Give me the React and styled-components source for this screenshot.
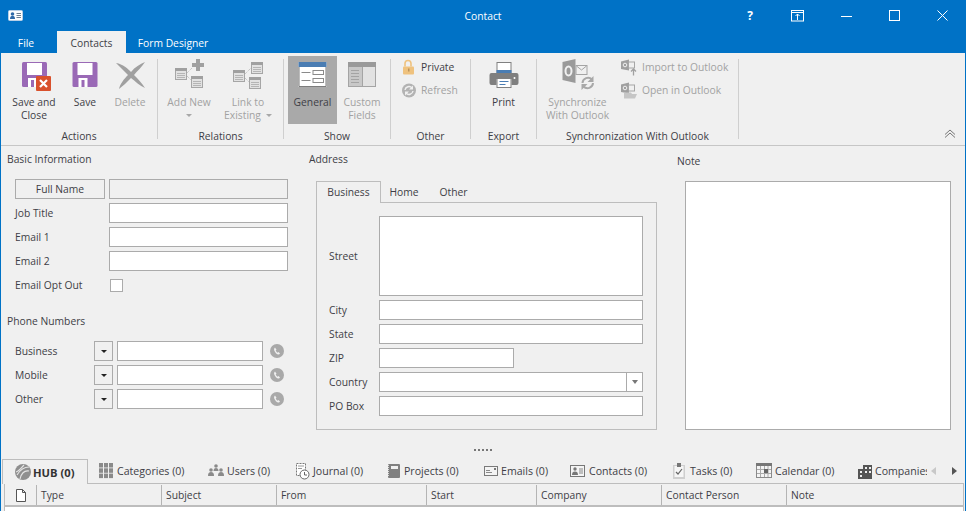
import React from 'react';
import styled, { createGlobalStyle } from 'styled-components';

const BLUE = '#0072c6';
const TEXT = '#3e3e46';
const MUTED = '#a2a2a2';
const FIELD = '#ababab';

const Global = createGlobalStyle`
  html, body { margin: 0; padding: 0; background: #f0f0f0; }
  * { box-sizing: border-box; }
`;

const Window = styled.div`
  width: 966px; height: 511px; overflow: hidden; background: ${BLUE};
  font-family: "Open Sans", "Liberation Sans", sans-serif; font-size: 10.3px; color: ${TEXT};
  display: flex; flex-direction: column;
`;
const TitleBar = styled.div`height: 31px; display: flex; align-items: center; padding-left: 8px; position: relative;`;
const Title = styled.div`
  position: absolute; left: 0; right: 0; top: 0; height: 31px; line-height: 32px; text-align: center; color: #fff;
  pointer-events: none;
`;
const WindowButtons = styled.div`display: flex; margin-left: auto;`;
const WindowButton = styled.div`width: 48px; height: 31px; display: flex; align-items: center; justify-content: center; color: #fff; font-weight: 700; font-size: 12px;`;

const MenuTabs = styled.div`height: 22px; display: flex; align-items: stretch;`;
const MenuTab = styled.div`
  width: ${p => p.$w}px; margin-left: ${p => p.$ml || 0}px; text-align: center; line-height: 24px;
  color: ${p => (p.$active ? TEXT : '#fff')}; background: ${p => (p.$active ? '#f0f0f0' : 'transparent')};
`;

const Body = styled.div`
  flex: 1; min-height: 0; margin: 0 1px; background: #f0f0f0; display: flex; flex-direction: column;
`;
const Ribbon = styled.div`
  height: 93px; flex: none; border-bottom: 1px solid #c6c6c6; display: flex; padding-top: 3px; color: ${TEXT};
`;
const Group = styled.div`width: ${p => p.$w}px; display: flex; flex-direction: column; flex: none;`;
const GroupItems = styled.div`height: 68px; display: flex; padding-left: ${p => p.$pl || 0}px;`;
const GroupLabel = styled.div`height: 16px; margin-top: 4px; line-height: 16px; text-align: center;`;
const Sep = styled.div`width: 1px; flex: none; height: 80px; margin-top: 3px; background: #cfcfcf;`;
const BigButton = styled.div`
  width: ${p => p.$w}px; flex: none; display: flex; flex-direction: column; align-items: center; padding-top: 2px;
  background: ${p => (p.$on ? '#a9a9a9' : 'transparent')}; color: ${p => (p.$off ? MUTED : TEXT)};
  margin-left: ${p => p.$ml || 0}px; text-align: center; line-height: 13px;
`;
const BigIcon = styled.svg`width: 44px; height: 37px; margin-bottom: 1px; flex: none; overflow: visible;`;
const Caret = styled.span`display: block; width: 0; height: 0; margin: 5px auto 0; border: 3px solid transparent; border-top: 3px solid #a8a8a8; border-bottom: 0;`;
const InlineCaret = styled(Caret)`display: inline-block; margin: 0 0 2px 5px;`;
const SmallCol = styled.div`display: flex; flex-direction: column; margin-left: ${p => p.$ml || 0}px;`;
const SmallRow = styled.div`height: 21px; margin-bottom: 2px; display: flex; align-items: center; color: ${p => (p.$off ? MUTED : TEXT)};`;
const SmallIcon = styled.svg`width: ${p => p.$w}px; height: 18px; flex: none; margin-right: ${p => p.$mr}px; overflow: visible;`;
const Collapse = styled.svg`margin: auto 9px 6px auto; width: 12px; height: 10px; flex: none;`;

const FormArea = styled.div`height: 294px; flex: none; display: flex;`;
const Col = styled.div`width: ${p => p.$w}px; flex: none; padding: ${p => p.$pt}px 0 0 ${p => p.$pl}px;`;
const SectionTitle = styled.div`height: 14px; line-height: 14px;`;
const PhoneTitle = styled(SectionTitle)`margin-top: 19px;`;
const Rows = styled.div`margin: ${p => p.$mt}px 0 0 ${p => p.$ml}px; display: flex; flex-direction: column; gap: 4px;`;
const Row = styled.div`display: flex; align-items: center; height: ${p => p.$h || 20}px;`;
const RowLabel = styled.div`width: ${p => p.$w}px; flex: none;`;
const Input = styled.div`
  width: ${p => p.$w}px; height: ${p => p.$h || 20}px; flex: none; background: ${p => (p.$ro ? '#f0f0f0' : '#fff')};
  border: 1px solid ${FIELD};
`;
const NameButton = styled.div`width: 90px; height: 20px; margin-right: 4px; flex: none; border: 1px solid ${FIELD}; text-align: center; line-height: 18px;`;
const Check = styled.div`width: 13px; height: 13px; background: #fff; border: 1px solid ${FIELD}; margin-left: 1px;`;
const DropButton = styled.div`
  width: 19px; height: 20px; flex: none; border: 1px solid ${FIELD}; margin-right: 4px; display: flex; align-items: center; justify-content: center;
  &::after { content: ''; border: 3px solid transparent; border-top: 3px solid #222; border-bottom: 0; }
`;
const PhoneIcon = styled.svg`width: 14px; height: 14px; margin-left: 7px; flex: none;`;

const AddressTabs = styled.div`display: flex; margin: 15px 0 0 7px; height: 22px; position: relative; z-index: 1;`;
const AddressTab = styled.div`
  width: ${p => p.$w}px; height: 22px; text-align: center; line-height: 23px;
  ${p => p.$active && `border: 1px solid #bdbdbd; border-bottom: 0; background: #f0f0f0; line-height: 21px;`}
`;
const AddressPanel = styled.div`
  width: 341px; height: 228px; margin: -1px 0 0 7px; border: 1px solid #bdbdbd; padding: 13px 0 0 12px;
  display: flex; flex-direction: column; gap: 4px;
`;
const ComboInput = styled(Input)`
  display: flex; justify-content: flex-end;
`;
const ComboButton = styled.div`
  width: 16px; border-left: 1px solid ${FIELD}; display: flex; align-items: center; justify-content: center;
  &::after { content: ''; border: 3.5px solid transparent; border-top: 4px solid #777; border-bottom: 0; }
`;
const NoteBox = styled.div`width: 266px; height: 249px; margin: 13px 0 0 8px; background: #fff; border: 1px solid ${FIELD};`;

const Splitter = styled.div`height: 19px; flex: none; display: flex; justify-content: center; gap: 2px; padding-top: 9px;`;
const Dot = styled.span`width: 2px; height: 2px; background: #777;`;

const BottomTabs = styled.div`height: 24px; flex: none; display: flex; padding-left: 1px; position: relative; font-size: 10.6px;`;
const BottomTab = styled.div`
  width: ${p => p.$w}px; height: 24px; flex: none; display: flex; align-items: center; padding-left: ${p => p.$pl ?? 11}px; overflow: hidden; white-space: nowrap;
  ${p => p.$active && `border: 1px solid #bdbdbd; border-bottom: 0; background: #f0f0f0; font-weight: 700; font-size: 11.2px; position: relative; z-index: 1; height: 25px; color: #333;`}
`;
const TabIcon = styled.svg`width: ${p => p.$w}px; height: 18px; flex: none; margin-right: ${p => p.$mr ?? 4}px; overflow: visible;`;
const Scroller = styled.div`display: flex; gap: 16px; align-items: center; margin-left: 4px;`;
const Arrow = styled.span`width: 0; height: 0; border: 4px solid transparent; border-right: 0; border-left: 5px solid ${p => (p.$on ? '#555' : '#c8c8c8')}; transform: scaleX(${p => (p.$flip ? -1 : 1)});`;
const GridPanel = styled.div`flex: 1; margin: 0 1px 0 3px; border: 1px solid #bdbdbd; border-bottom: 0; background: #fff; display: flex; flex-direction: column;`;
const GridHeader = styled.div`height: 23px; flex: none; background: #f0f0f0; display: flex; border-bottom: 2px solid #bdbdbd; padding-top: 1px;`;
const GridCell = styled.div`
  width: ${p => p.$w}px; flex: ${p => (p.$grow ? 1 : 'none')}; padding-left: 4px; display: flex; align-items: center; height: 20px;
  ${p => !p.$last && 'border-right: 1px solid #b4b4b4;'}
`;
const DocCell = styled(GridCell)`padding-left: 11px;`;

const Floppy = ({ x, y }) => (
  <g transform={`translate(${x} ${y})`}>
    <rect width="25" height="25" rx="1.5" fill="#9a69b6" />
    <rect x="5" y="1" width="15" height="12" fill="#fff" />
    <rect x="6" y="16" width="9" height="9" fill="#fff" />
    <rect x="9" y="18" width="3" height="7" fill="#9a69b6" />
  </g>
);
const Doc = ({ x, y }) => (
  <g transform={`translate(${x} ${y})`}>
    <rect x=".5" y=".5" width="11" height="11" fill="#e2e2e2" stroke="#a6a6a6" />
    <rect width="12" height="3" fill="#a0a0a0" />
    <path d="M2 5.5h8M2 7.5h8M2 9.5h8" stroke="#b5b5b5" />
  </g>
);
const view = (cx, y = 58) => `${cx - 22} ${y} 44 37`;

const WIDTHS = [32, 125, 115, 150, 110, 125, 125];
const GRID = ['Type', 'Subject', 'From', 'Start', 'Company', 'Contact Person'];

export default function App() {
  return (
    <Window>
      <Global />
      <TitleBar>
        <svg width="15" height="11" viewBox="0 0 15 11">
          <rect x=".5" y=".5" width="14" height="10" rx="1" fill="#fff" stroke="#b8cfe6" />
          <circle cx="4.5" cy="4" r="1.8" fill="#2f6aa8" />
          <path d="M2 9c0-2.500 1-3 2.500-3S7 6.500 7 9z" fill="#2f6aa8" />
          <path d="M8.500 3.500h4.500M8.500 5.500h4.500M8.500 7.500h4.500" stroke="#6f7f90" />
        </svg>
        <Title>Contact</Title>
        <WindowButtons>
          <WindowButton>?</WindowButton>
          <WindowButton>
            <svg width="14" height="12" viewBox="0 0 14 12" fill="none" stroke="#fff">
              <rect x=".5" y=".5" width="12" height="10.500" />
              <path d="M0 2.500h13M6.500 10V4M4.500 6l2-2 2 2" />
            </svg>
          </WindowButton>
          <WindowButton>
            <svg width="11" height="11" viewBox="0 0 11 11" stroke="#fff"><path d="M0 6.500h11" /></svg>
          </WindowButton>
          <WindowButton>
            <svg width="11" height="11" viewBox="0 0 11 11" fill="none" stroke="#fff"><rect x=".5" y=".5" width="10" height="10" /></svg>
          </WindowButton>
          <WindowButton>
            <svg width="11" height="11" viewBox="0 0 11 11" stroke="#fff"><path d="M.5.500l10 10M10.500.500l-10 10" /></svg>
          </WindowButton>
        </WindowButtons>
      </TitleBar>
      <MenuTabs>
        <MenuTab $w={52}>File</MenuTab>
        <MenuTab $w={69} $ml={5} $active>Contacts</MenuTab>
        <MenuTab $w={94}>Form Designer</MenuTab>
      </MenuTabs>
      <Body>
        <Ribbon>
          <Group $w={156}>
            <GroupItems $pl={5}>
              <BigButton $w={56}>
                <BigIcon viewBox={view(33)}>
                  <Floppy x={21} y={62} />
                  <rect x="35" y="76" width="15" height="15" rx="1" fill="#d9512c" />
                  <path d="M39 80l7 7M46 80l-7 7" stroke="#fff" strokeWidth="2.200" />
                </BigIcon>
                Save and Close
              </BigButton>
              <BigButton $w={46}>
                <BigIcon viewBox={view(85.5)}><Floppy x={73} y={62} /></BigIcon>
                Save
              </BigButton>
              <BigButton $w={44} $off>
                <BigIcon viewBox={view(131)}>
                  <path d="M117 63C124 64 129 69 132 72C136 67 141 64 146 62C143 67 138 71 135 75C139 79 143 83 146 88C141 86 136 81 132 78C128 82 124 86 120 89C121 84 125 79 129 75C125 71 121 67 117 63z" fill="#a0a0a0" />
                </BigIcon>
                Delete
              </BigButton>
            </GroupItems>
            <GroupLabel>Actions</GroupLabel>
          </Group>
          <Sep />
          <Group $w={125}>
            <GroupItems $pl={5}>
              <BigButton $w={52} $off>
                <BigIcon viewBox={view(189)}>
                  <path d="M187 73l5-5M187 76l4 4" stroke="#b5b5b5" strokeDasharray="1 1" fill="none" />
                  <Doc x={175} y={68} /><Doc x={191} y={76} />
                  <path d="M196 59h4v4h4v4h-4v4h-4v-4h-4v-4h4z" fill="#a0a0a0" />
                </BigIcon>
                Add New
                <Caret />
              </BigButton>
              <BigButton $w={56} $ml={5} $off>
                <BigIcon viewBox={view(248)}>
                  <path d="M245 74l6-6M245 78l4 4" stroke="#b5b5b5" strokeDasharray="1 1" fill="none" />
                  <Doc x={233} y={70} /><Doc x={251} y={62} /><Doc x={249} y={77} />
                </BigIcon>
                <span>Link to<br />Existing<InlineCaret /></span>
              </BigButton>
            </GroupItems>
            <GroupLabel>Relations</GroupLabel>
          </Group>
          <Sep />
          <Group $w={106}>
            <GroupItems $pl={4}>
              <BigButton $w={49} $on>
                <BigIcon viewBox={view(312.5)}>
                  <rect x="298" y="62" width="28" height="25" fill="#fff" />
                  <path d="M298.500 67v19.500h27V67" fill="none" stroke="#7d7d7d" />
                  <rect x="298" y="62" width="28" height="5" fill="#4a7db3" />
                  <path d="M301 72.500h9M301 80.500h9" stroke="#8a8a8a" />
                  <rect x="312.500" y="70.500" width="10.500" height="4" fill="#fff" stroke="#8a8a8a" />
                  <rect x="312.500" y="78.500" width="10.500" height="4" fill="#fff" stroke="#8a8a8a" />
                </BigIcon>
                General
              </BigButton>
              <BigButton $w={48} $ml={1} $off>
                <BigIcon viewBox={view(362)}>
                  <rect x="348.500" y="62.500" width="27" height="24" fill="#e2e2e2" stroke="#a4a4a4" />
                  <rect x="349" y="67" width="13" height="19" fill="#c8c8c8" />
                  <rect x="348" y="62" width="28" height="5" fill="#9a9a9a" />
                  <path d="M362.500 67v19M351 70.500h8M351 73.500h8M351 76.500h8M351 79.500h8M351 82.500h8" stroke="#a4a4a4" />
                </BigIcon>
                <span>Custom<br />Fields</span>
              </BigButton>
            </GroupItems>
            <GroupLabel>Show</GroupLabel>
          </Group>
          <Sep />
          <Group $w={79}>
            <GroupItems $pl={11}>
              <SmallCol>
                <SmallRow>
                  <SmallIcon $w={15} $mr={4} viewBox="402 57.5 15 18">
                    <path d="M405 66v-3a3 3 0 0 1 6 0v3" fill="none" stroke="#efc27e" strokeWidth="1.600" />
                    <rect x="403" y="66" width="11" height="8" rx="1" fill="#efc27e" />
                    <rect x="408" y="68" width="1.500" height="3" fill="#b9935c" />
                  </SmallIcon>
                  Private
                </SmallRow>
                <SmallRow $off>
                  <SmallIcon $w={15} $mr={4} viewBox="402 80.5 15 18">
                    <circle cx="409" cy="90" r="7" fill="#b3b3b3" />
                    <path d="M405 89.500a4 4 0 0 1 7-2M413 90.500a4 4 0 0 1-7 2" fill="none" stroke="#f0f0f0" strokeWidth="1.400" />
                    <path d="M413 85v4h-4zM405 95v-4h4z" fill="#f0f0f0" />
                  </SmallIcon>
                  Refresh
                </SmallRow>
              </SmallCol>
            </GroupItems>
            <GroupLabel>Other</GroupLabel>
          </Group>
          <Sep />
          <Group $w={65}>
            <GroupItems>
              <BigButton $w={65}>
                <BigIcon viewBox={view(503.5)}>
                  <rect x="496.500" y="62.500" width="14" height="11" fill="#fff" stroke="#808080" />
                  <rect x="496" y="70" width="15" height="3" fill="#4a7db3" />
                  <path d="M491 73h25a2 2 0 0 1 2 2v8a2 2 0 0 1-2 2h-5v-6h-15v6h-5a2 2 0 0 1-2-2v-8a2 2 0 0 1 2-2z" fill="#7f7f7f" />
                  <circle cx="514" cy="78" r="1" fill="#fff" />
                  <rect x="496.500" y="78.500" width="14" height="9" fill="#fff" stroke="#808080" />
                  <path d="M499 81.500h9M499 84.500h6" stroke="#4a7db3" />
                </BigIcon>
                Print
              </BigButton>
            </GroupItems>
            <GroupLabel>Export</GroupLabel>
          </Group>
          <Sep />
          <Group $w={201}>
            <GroupItems $pl={8}>
              <BigButton $w={65} $off>
                <BigIcon viewBox={view(577.5)}>
                  <path d="M562 62l13-3v24l-13-3z" fill="#9a9a9a" />
                  <ellipse cx="568" cy="71" rx="3" ry="4.500" fill="none" stroke="#f0f0f0" strokeWidth="2" />
                  <rect x="575.500" y="65.500" width="11" height="9" fill="#f0f0f0" stroke="#a4a4a4" />
                  <path d="M576 66l5 4 5-4" fill="none" stroke="#a4a4a4" />
                  <path d="M582 83a5.500 5.500 0 0 1 9.500-3.500M592.500 83a5.500 5.500 0 0 1-9.500 3.500" fill="none" stroke="#a8a8a8" strokeWidth="2" />
                  <path d="M593 76v6h-6zM581 90v-6h6z" fill="#a8a8a8" />
                </BigIcon>
                <span>Synchronize<br />With Outlook</span>
              </BigButton>
              <SmallCol $ml={11}>
                <SmallRow $off>
                  <SmallIcon $w={16} $mr={5} viewBox="622 57.5 16 18">
                    <path d="M622 61l8-2v11l-8-1.500z" fill="#a0a0a0" />
                    <circle cx="626" cy="64.500" r="1.800" fill="none" stroke="#f0f0f0" />
                    <rect x="629.500" y="61.500" width="6" height="6" fill="#f0f0f0" stroke="#a6a6a6" />
                    <path d="M634.500 75v-6M632 71l2.500-2.500L637 71" fill="none" stroke="#a0a0a0" strokeWidth="1.300" />
                  </SmallIcon>
                  Import to Outlook
                </SmallRow>
                <SmallRow $off>
                  <SmallIcon $w={16} $mr={5} viewBox="622 80.5 16 18">
                    <path d="M622 84l8-2v11l-8-1.500z" fill="#a0a0a0" />
                    <circle cx="626" cy="87.500" r="1.800" fill="none" stroke="#f0f0f0" />
                    <rect x="629.500" y="84.500" width="6" height="6" fill="#f0f0f0" stroke="#a6a6a6" />
                    <path d="M625 92h7l1 1.500h5l-2 4.500h-11z" fill="#c6c6c6" />
                  </SmallIcon>
                  Open in Outlook
                </SmallRow>
              </SmallCol>
            </GroupItems>
            <GroupLabel>Synchronization With Outlook</GroupLabel>
          </Group>
          <Sep />
          <Collapse viewBox="0 0 12 10" fill="none" stroke="#777">
            <path d="M1 5.500L6 1l5 4.500M1 8.500L6 4l5 4.500" />
          </Collapse>
        </Ribbon>

        <FormArea>
          <Col $w={300} $pt={6} $pl={6}>
            <SectionTitle>Basic Information</SectionTitle>
            <Rows $mt={13} $ml={8}>
              <Row><NameButton>Full Name</NameButton><Input $w={179} $ro /></Row>
              <Row><RowLabel $w={94}>Job Title</RowLabel><Input $w={179} /></Row>
              <Row><RowLabel $w={94}>Email 1</RowLabel><Input $w={179} /></Row>
              <Row><RowLabel $w={94}>Email 2</RowLabel><Input $w={179} /></Row>
              <Row><RowLabel $w={94}>Email Opt Out</RowLabel><Check /></Row>
            </Rows>
            <PhoneTitle>Phone Numbers</PhoneTitle>
            <Rows $mt={13} $ml={8}>
              {['Business', 'Mobile', 'Other'].map(l => (
                <Row key={l}>
                  <RowLabel $w={79}>{l}</RowLabel>
                  <DropButton />
                  <Input $w={146} />
                  <PhoneIcon viewBox="0 0 14 14">
                    <circle cx="7" cy="7" r="7" fill="#a9a9a9" />
                    <path d="M5 3.500c-1 .8-1.200 2-.5 3.500s2 3 3.500 3.500c.9.200 1.600-.2 2-1l-1.500-1.500-1 .7c-.8-.5-1.400-1.200-1.800-2.200l.8-.8z" fill="#f0f0f0" />
                  </PhoneIcon>
                </Row>
              ))}
            </Rows>
          </Col>
          <Col $w={376} $pt={6} $pl={8}>
            <SectionTitle>Address</SectionTitle>
            <AddressTabs>
              <AddressTab $w={65} $active>Business</AddressTab>
              <AddressTab $w={46}>Home</AddressTab>
              <AddressTab $w={53}>Other</AddressTab>
            </AddressTabs>
            <AddressPanel>
              <Row $h={80}><RowLabel $w={50}>Street</RowLabel><Input $w={264} $h={80} /></Row>
              <Row><RowLabel $w={50}>City</RowLabel><Input $w={264} /></Row>
              <Row><RowLabel $w={50}>State</RowLabel><Input $w={264} /></Row>
              <Row><RowLabel $w={50}>ZIP</RowLabel><Input $w={135} /></Row>
              <Row><RowLabel $w={50}>Country</RowLabel><ComboInput $w={264}><ComboButton /></ComboInput></Row>
              <Row><RowLabel $w={50}>PO Box</RowLabel><Input $w={264} /></Row>
            </AddressPanel>
          </Col>
          <Col $w={280} $pt={8} $pl={0}>
            <SectionTitle>Note</SectionTitle>
            <NoteBox />
          </Col>
        </FormArea>

        <Splitter>{[0, 1, 2, 3, 4].map(i => <Dot key={i} />)}</Splitter>

        <BottomTabs>
          <BottomTab $w={86} $active $pl={12}>
            <TabIcon $w={16} $mr={2} viewBox="15 462 16 18">
              <circle cx="23" cy="471" r="8" fill="#8f8f8f" />
              <path d="M17 474c3-5 8-8 12-8M20 478c1-5 4-9 9-8M24 464c-3 3-5 6-8 7" fill="none" stroke="#e4e4e4" strokeWidth="1.200" />
            </TabIcon>
            HUB (0)
          </BottomTab>
          <BottomTab $w={109}>
            <TabIcon $w={14} viewBox="99 462 14 18" fill="#8a8a8a">
              {[463, 468.3, 473.6].flatMap(y => [99, 104, 109].map(x => <rect key={`${x}${y}`} x={x} y={y} width="4" height="4.500" />))}
            </TabIcon>
            Categories (0)
          </BottomTab>
          <BottomTab $w={88}>
            <TabIcon $w={16} $mr={3} viewBox="208 462 16 18" fill="#8a8a8a">
              <circle cx="211" cy="470" r="1.800" /><path d="M208 476c0-3 1-4 3-4s3 1 3 4z" />
              <circle cx="216" cy="466" r="1.800" /><path d="M213.500 471c0-2 1-3 2.500-3s2.500 1 2.500 3z" />
              <circle cx="221" cy="470" r="1.800" /><path d="M218 476c0-3 1-4 3-4s3 1 3 4z" />
            </TabIcon>
            Users (0)
          </BottomTab>
          <BottomTab $w={92}>
            <TabIcon $w={14} $mr={3} viewBox="296 462 14 18">
              <path d="M296.500 463.500h9v12h-9z" fill="#fff" stroke="#777" strokeDasharray="2 1" />
              <path d="M298 466h6M298 468.500h4" stroke="#999" />
              <circle cx="304.500" cy="474.500" r="4.500" fill="#fff" stroke="#666" />
              <path d="M304.500 472v3h2.500" fill="none" stroke="#666" />
            </TabIcon>
            Journal (0)
          </BottomTab>
          <BottomTab $w={96}>
            <TabIcon $w={12} viewBox="388 462 12 18">
              <rect x="388" y="464" width="12" height="14" rx="1" fill="#808080" />
              <rect x="391" y="466" width="7" height="3" fill="#f0f0f0" />
              <path d="M388.500 465v12" stroke="#ddd" strokeDasharray="1 1" />
            </TabIcon>
            Projects (0)
          </BottomTab>
          <BottomTab $w={86}>
            <TabIcon $w={14} $mr={3} viewBox="484 462 14 18">
              <rect x="484.500" y="466.500" width="13" height="9" fill="#f4f4f4" stroke="#7a7a7a" />
              <path d="M486 470.500h4M486 472.500h6" stroke="#8a8a8a" />
              <rect x="494" y="468" width="2" height="2" fill="#777" />
            </TabIcon>
            Emails (0)
          </BottomTab>
          <BottomTab $w={103}>
            <TabIcon $w={15} $mr={4} viewBox="570 462 15 18">
              <rect x="570.500" y="465.500" width="14" height="11" fill="#f4f4f4" stroke="#777" />
              <circle cx="575" cy="469" r="1.700" fill="#777" />
              <path d="M572 475c0-2.500 1-3.500 3-3.500s3 1 3 3.500z" fill="#777" />
              <path d="M579 469h4M579 471h4M579 473h4" stroke="#888" />
            </TabIcon>
            Contacts (0)
          </BottomTab>
          <BottomTab $w={83}>
            <TabIcon $w={12} $mr={5} viewBox="673 462 12 18">
              <rect x="673" y="465" width="12" height="14" fill="#cfcfcf" />
              <rect x="674.500" y="466" width="9" height="11" fill="#f6f6f6" />
              <rect x="677" y="463" width="4" height="4" fill="#777" />
              <path d="M676 472l2 2 4-5" fill="none" stroke="#666" strokeWidth="1.200" />
            </TabIcon>
            Tasks (0)
          </BottomTab>
          <BottomTab $w={102}>
            <TabIcon $w={15} $mr={4} viewBox="756 462 15 18">
              <rect x="756.500" y="463.500" width="15" height="14" fill="#f4f4f4" stroke="#8a8a8a" />
              <rect x="756" y="463" width="16" height="3" fill="#777" />
              <path d="M760.500 466v11M764.500 466v11M768 466v11M757 469.500h14M757 473.500h14" stroke="#aaa" />
              <rect x="764" y="469" width="4" height="4" fill="#666" />
            </TabIcon>
            Calendar (0)
          </BottomTab>
          <BottomTab $w={80}>
            <TabIcon $w={14} $mr={3} viewBox="858 462 14 18">
              <path d="M858 469h5v-4h9v14h-14z" fill="#555" />
              <path d="M865 467h2v2h-2zM869 467h2v2h-2zM865 471h2v2h-2zM869 471h2v2h-2zM860 471h2v2h-2zM860 475h2v2h-2z" fill="#f0f0f0" />
            </TabIcon>
            Companies
          </BottomTab>
          <Scroller><Arrow $flip /><Arrow $on /></Scroller>
        </BottomTabs>
        <GridPanel>
          <GridHeader>
            <DocCell $w={WIDTHS[0]}>
              <svg width="10" height="13" viewBox="0 0 10 13" fill="#fff" stroke="#555">
                <path d="M.5.500h6l3 3v9h-9zM6.500.500v3h3" />
              </svg>
            </DocCell>
            {GRID.map((g, i) => <GridCell key={g} $w={WIDTHS[i + 1]}>{g}</GridCell>)}
            <GridCell $grow $last>Note</GridCell>
          </GridHeader>
        </GridPanel>
      </Body>
    </Window>
  );
}
